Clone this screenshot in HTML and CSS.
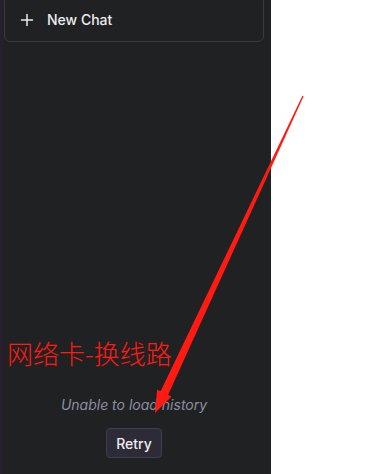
FILE: index.html
```html
<!DOCTYPE html>
<html lang="en">
<head>
    <meta charset="UTF-8">
    <meta name="viewport" content="width=device-width, initial-scale=1.0">
    <title>Chat History</title>
    <link rel="stylesheet" href="styles.css">
</head>
<body>

<div class="layout">
    <div class="edge"></div>
    <nav class="sidebar">
        <a class="new-chat" href="#">
            <svg class="plus" width="14" height="14" viewBox="0 0 14 14">
                <path d="M7 1.5v11M1.5 7h11" stroke="currentColor" stroke-width="1.5" fill="none" stroke-linecap="round"/>
            </svg>
            <span>New Chat</span>
        </a>

        <div class="history">
            <p class="history-error">Unable to load history</p>
            <button class="retry">Retry</button>
        </div>
    </nav>
    <main class="main"></main>
</div>

<!-- screenshot annotation -->
<div class="note">网络卡-换线路</div>
<svg class="arrow" width="377" height="474" viewBox="0 0 377 474">
    <polygon fill="#ff1a12" points="155,413 157.1,389.7 160.6,391.3 302.4,95.7 303.6,96.3 168.0,394.9 171.5,396.5"/>
</svg>

</body>
</html>
```

FILE: styles.css
```css
html, body {
    margin: 0;
    height: 100%;
}
body {
    font-family: Inter, "Noto Sans", sans-serif;
    background: #ffffff;
    overflow: hidden;
}
.layout {
    display: flex;
    height: 474px;
}
.edge {
    width: 3px;
    background: #2a1d30;
}
.sidebar {
    width: 268px;
    background: #202123;
    display: flex;
    flex-direction: column;
    padding: 0 7px 0 1px;
    box-sizing: border-box;
}
.main {
    flex: 1;
}
.new-chat {
    display: flex;
    align-items: center;
    gap: 13px;
    height: 46px;
    margin-top: -4px;
    padding: 1px 0 0 15px;
    border: 1px solid #3a3b3f;
    border-radius: 6px;
    box-sizing: border-box;
    color: #ececf1;
    text-decoration: none;
    font-size: 14px;
    font-weight: 500;
}
.plus {
    color: #ececf1;
}
.history {
    margin-top: auto;
    padding-bottom: 16px;
    display: flex;
    flex-direction: column;
    align-items: center;
}
.history-error {
    margin: 0 0 15px;
    font-size: 14px;
    font-style: italic;
    color: #8e8ea0;
}
.retry {
    font-family: inherit;
    font-size: 14px;
    font-weight: 500;
    color: #ececf1;
    background: #2c2b37;
    border: 1px solid #3e3e4c;
    border-radius: 4px;
    height: 30px;
    padding: 0 9px;
    cursor: pointer;
}
.note {
    position: absolute;
    left: 7px;
    top: 334px;
    font-family: "Noto Sans CJK SC", sans-serif;
    font-size: 26px;
    font-weight: 300;
    color: #ff1a12;
    white-space: nowrap;
}
.arrow {
    position: absolute;
    left: 0;
    top: 0;
    pointer-events: none;
}
```
